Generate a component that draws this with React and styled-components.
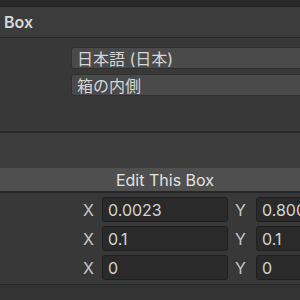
import styled, { createGlobalStyle } from "styled-components";

const Global = createGlobalStyle`
  html, body {
    margin: 0;
    padding: 0;
    background: #383838;
  }
  body {
    font-family: Inter, "Noto Sans", "Noto Sans CJK JP", sans-serif;
  }
`;

const Panel = styled.div`
  width: 300px;
  height: 300px;
  overflow: hidden;
  display: flex;
  flex-direction: column;
  background: #383838;
  color: #d2d2d2;
`;

const TopStrip = styled.div`
  height: 6px;
  background: #282828;
  border-bottom: 1px solid #222;
`;

const Header = styled.div`
  height: 30px;
  display: flex;
  align-items: center;
  padding-left: 4px;
  background: #3c3c3c;
  border-bottom: 1px solid #262626;
  font-size: 16px;
  font-weight: 600;
  color: #d8d8d8;
`;

const Settings = styled.div`
  height: 95px;
  padding: 9px 0 0 71px;
  display: flex;
  flex-direction: column;
  gap: 5px;
  box-sizing: border-box;
  border-bottom: 2px solid #2a2a2a;
`;

const Dropdown = styled.div`
  height: 22px;
  width: 260px;
  display: flex;
  align-items: center;
  padding-left: 5px;
  box-sizing: border-box;
  background: #4a4a4a;
  border: 1px solid #303030;
  border-radius: 3px;
  font-size: 16px;
  color: #d6d6d6;
`;

const Spacer = styled.div`
  height: 35px;
  background: #3c3c3c;
`;

const SectionBar = styled.div`
  height: 23px;
  display: flex;
  align-items: center;
  justify-content: center;
  padding-left: 30px;
  background: #4f4f4f;
  border-bottom: 2px solid #262626;
  font-size: 16px;
  color: #e2e2e2;
`;

const Fields = styled.div`
  padding: 4px 0 0 83px;
  height: 92px;
  box-sizing: border-box;
  display: flex;
  flex-direction: column;
  gap: 4px;
  border-bottom: 1px solid #262626;
`;

const Row = styled.div`
  display: flex;
  align-items: center;
  height: 25px;
`;

const Axis = styled.span`
  width: ${(p) => p.$w}px;
  flex-shrink: 0;
  padding-left: ${(p) => p.$pad}px;
  box-sizing: border-box;
  font-size: 16px;
  color: #c8c8c8;
`;

const NumberBox = styled.div`
  width: 126px;
  height: 25px;
  flex-shrink: 0;
  display: flex;
  align-items: center;
  padding-left: 5px;
  box-sizing: border-box;
  background: #2a2a2a;
  border: 1px solid #1f1f1f;
  border-radius: 3px;
  font-size: 16px;
  color: #d4d4d4;
  white-space: nowrap;
  overflow: hidden;
`;

const Footer = styled.div`
  flex: 1;
  background: #333;
`;

const rows = [
  ["0.0023", "0.8000"],
  ["0.1", "0.1"],
  ["0", "0"],
];

export default function App() {
  return (
    <Panel>
      <Global />
      <TopStrip />
      <Header>Box</Header>
      <Settings>
        <Dropdown>日本語 (日本)</Dropdown>
        <Dropdown>箱の内側</Dropdown>
      </Settings>
      <Spacer />
      <SectionBar>Edit This Box</SectionBar>
      <Fields>
        {rows.map(([x, y], i) => (
          <Row key={i}>
            <Axis $w={19} $pad={0}>X</Axis>
            <NumberBox>{x}</NumberBox>
            <Axis $w={28} $pad={7}>Y</Axis>
            <NumberBox>{y}</NumberBox>
          </Row>
        ))}
      </Fields>
      <Footer />
    </Panel>
  );
}
